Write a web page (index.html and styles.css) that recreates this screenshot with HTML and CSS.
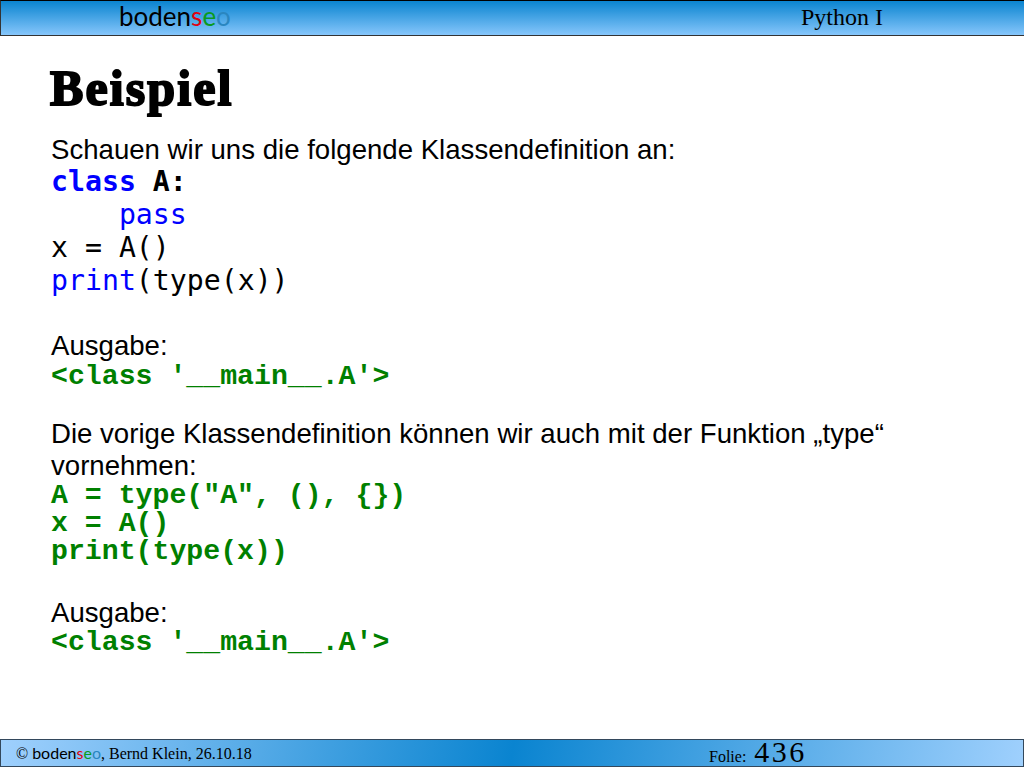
FILE: index.html
```html
<!DOCTYPE html>
<html lang="de">
<head>
<meta charset="utf-8">
<title>Beispiel</title>
<link rel="stylesheet" href="styles.css">
</head>
<body>
<div class="slide">
  <header class="topbar">
    <div class="logo">boden<span class="red">s</span><span class="green">e</span><span class="blue">o</span></div>
    <div class="course">Python I</div>
  </header>
  <main class="content">
    <h1 class="title">Beispiel</h1>
    <p class="text">Schauen wir uns die folgende Klassendefinition an:</p>
    <pre class="code"><b class="kw">class</b> <b>A:</b>
    <span class="kw">pass</span>
x = A()
<span class="kw">print</span>(type(x))</pre>
    <p class="text gap1">Ausgabe:</p>
    <pre class="out nudge">&lt;class '__main__.A'&gt;</pre>
    <p class="text gap2">Die vorige Klassendefinition können wir auch mit der Funktion „type“<br>vornehmen:</p>
    <pre class="out">A = type("A", (), {})
x = A()
print(type(x))</pre>
    <p class="text gap3">Ausgabe:</p>
    <pre class="out">&lt;class '__main__.A'&gt;</pre>
  </main>
  <footer class="bottombar">
    <div class="copy">© <span class="flogo">boden<span class="red">s</span><span class="green">e</span><span class="blue">o</span></span>, Bernd Klein, 26.10.18</div>
    <div class="folie"><span class="folie-label">Folie:</span> <span class="folie-num">436</span></div>
  </footer>
</div>
</body>
</html>
```
FILE: styles.css
```css
html, body { margin: 0; padding: 0; background: #fff; }
.slide { width: 1024px; height: 767px; display: flex; flex-direction: column; overflow: hidden; color: #000; font-family: "Liberation Sans", sans-serif; }
.topbar { height: 36px; box-sizing: border-box; flex: none; display: flex; align-items: center; border: 1px solid #333; border-top-color: #000; border-right: 0; background: linear-gradient(#0a84d0, #86c6fb); padding-left: 118px; }
.logo { font-family: Lato, sans-serif; font-weight: 400; font-size: 26px; line-height: 30px; width: 682px; margin-bottom: 4px; }
.red { color: #e00010; }
.green { color: #0a9a20; }
.blue { color: #2a86c0; }
.course { font-family: "Liberation Serif", serif; font-size: 24px; margin-bottom: 2px; }
.content { flex: 1; padding: 0 0 0 51px; }
.title { margin: 25px 0 19px -1px; font-family: "Liberation Serif", serif; font-weight: 900; font-size: 50px; line-height: 54px; letter-spacing: 2.1px; -webkit-text-stroke: 2px #000; }
.text { margin: 8px 0 0; font-size: 27.6px; line-height: 32px; }
.code { margin: -1px 0 0; font-family: "DejaVu Sans Mono", monospace; font-size: 28.2px; line-height: 33px; }
.kw { color: #0000ff; }
.out { margin: 0; font-family: "Liberation Mono", monospace; font-weight: bold; color: #008000; font-size: 28.2px; line-height: 28px; }
.nudge { margin-top: 1px; }
.gap1 { margin-top: 33px; }
.gap2 { margin-top: 27px; }
.gap3 { margin-top: 31px; }
.bottombar { height: 28px; box-sizing: border-box; flex: none; display: flex; align-items: center; border: 1px solid #33485c; background: linear-gradient(100deg, #9fd0fd 0%, #0a84d0 50%, #9fd0fd 100%); padding-left: 15px; font-family: "Liberation Serif", serif; font-size: 16px; }
.copy { width: 693px; }
.flogo { font-family: Lato, sans-serif; }
.folie-num { font-size: 30px; line-height: 24px; letter-spacing: 2.5px; margin-left: 4px; }
```
